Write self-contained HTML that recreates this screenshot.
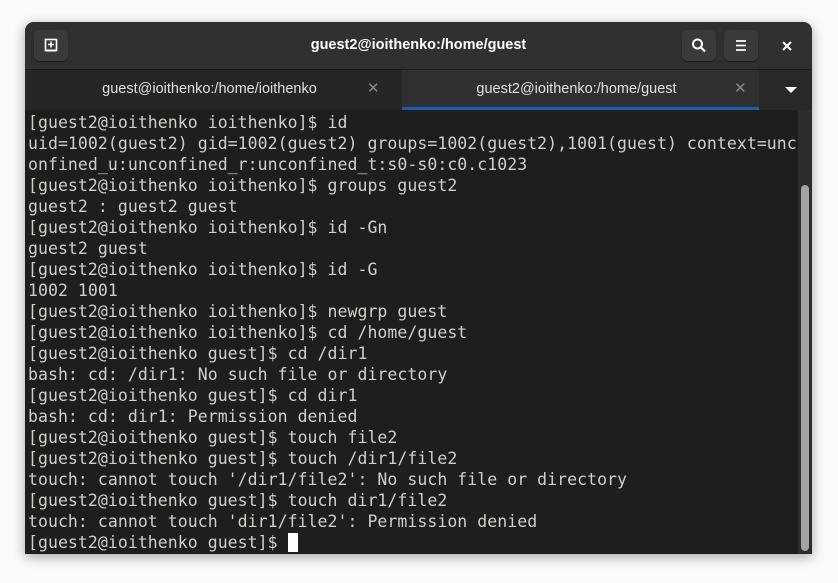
<!DOCTYPE html>
<html><head><meta charset="utf-8"><style>
body{margin:0;width:838px;height:583px;background:#fafafa;position:relative;overflow:hidden;font-family:"Liberation Sans",sans-serif}
.win{position:absolute;left:25px;top:22px;width:787px;height:532px;background:#1e1e1e;border-radius:9px 9px 0 0;overflow:hidden;box-shadow:0 3px 12px rgba(0,0,0,.35)}
.hdr{position:absolute;left:0;top:0;width:787px;height:47px;background:#303030;border-bottom:1px solid #1a1a1a}
.btn{position:absolute;top:8px;width:34px;height:31px;background:#3a3a3a;border-radius:5px;box-shadow:0 1px 1px #1a1a1a}
.title{position:absolute;left:0;width:787px;top:15px;text-align:center;color:#fff;font-weight:bold;font-size:14.5px}
.tabs{position:absolute;top:48px;left:0;width:787px;height:40px;background:#282828}
.tab{position:absolute;top:0;height:40px;color:#e0e0e0;font-size:14.5px;line-height:38px;text-align:center}
.x{position:absolute;color:#888;font-size:15px;top:0;line-height:38px}
.term{position:absolute;left:0;top:88px;width:773px;height:444px;background:#1e1e1e}
pre{margin:0;position:absolute;left:3px;top:2px;font-family:"DejaVu Sans Mono","Liberation Mono",monospace;font-size:16.5px;letter-spacing:0.05px;line-height:21px;color:#d0cfcc}
.sb{position:absolute;left:773px;top:88px;width:14px;height:444px;background:#2c2c2c}
.th{position:absolute;left:3px;top:75px;width:8px;height:366px;background:#a4a4a4;border-radius:4px}
</style></head><body>
<div class="win">
 <div class="hdr">
  <div class="btn" style="left:9px"><svg width="34" height="31"><rect x="11.5" y="9.5" width="11" height="11" fill="none" stroke="#fff" stroke-width="1.6"/><path d="M12 20.5h10" stroke="#fff" stroke-width="2"/><path d="M17 11.5v6M14 14.5h6" stroke="#fff" stroke-width="1.6"/></svg></div>
  <div class="title">guest2@ioithenko:/home/guest</div>
  <div class="btn" style="left:657px"><svg width="34" height="31"><circle cx="15.5" cy="14" r="4.5" fill="none" stroke="#fff" stroke-width="2"/><path d="M19 17.5l4 4" stroke="#fff" stroke-width="2.2"/></svg></div>
  <div class="btn" style="left:699px"><svg width="34" height="31"><path d="M12 11h10M12 15.5h10M12 20h10" stroke="#fff" stroke-width="1.8"/></svg></div>
  <svg style="position:absolute;left:755px;top:17px" width="14" height="14"><path d="M3 3l8 8M11 3l-8 8" stroke="#fff" stroke-width="2"/></svg>
 </div>
 <div class="tabs">
  <div class="tab" style="left:0;width:377px;background:#262626"><span style="position:absolute;left:-4px;width:377px">guest@ioithenko:/home/ioithenko</span><span class="x" style="left:342px">✕</span></div>
  <div class="tab" style="left:377px;width:357px;background:#303030;border-bottom:3px solid #1c5fb0;height:37px"><span style="position:absolute;left:-4px;width:357px">guest2@ioithenko:/home/guest</span><span class="x" style="left:332px">✕</span></div>
  <svg style="position:absolute;left:759px;top:15px" width="14" height="10"><path d="M1 2h12l-6 6z" fill="#fff"/></svg>
 </div>
 <div class="term"><pre>[guest2@ioithenko ioithenko]$ id
uid=1002(guest2) gid=1002(guest2) groups=1002(guest2),1001(guest) context=unc
onfined_u:unconfined_r:unconfined_t:s0-s0:c0.c1023
[guest2@ioithenko ioithenko]$ groups guest2
guest2 : guest2 guest
[guest2@ioithenko ioithenko]$ id -Gn
guest2 guest
[guest2@ioithenko ioithenko]$ id -G
1002 1001
[guest2@ioithenko ioithenko]$ newgrp guest
[guest2@ioithenko ioithenko]$ cd /home/guest
[guest2@ioithenko guest]$ cd /dir1
bash: cd: /dir1: No such file or directory
[guest2@ioithenko guest]$ cd dir1
bash: cd: dir1: Permission denied
[guest2@ioithenko guest]$ touch file2
[guest2@ioithenko guest]$ touch /dir1/file2
touch: cannot touch '/dir1/file2': No such file or directory
[guest2@ioithenko guest]$ touch dir1/file2
touch: cannot touch 'dir1/file2': Permission denied
[guest2@ioithenko guest]$ <span style="background:#fff">&#160;</span></pre></div>
 <div class="sb"><div class="th"></div></div>
</div>
</body></html>
